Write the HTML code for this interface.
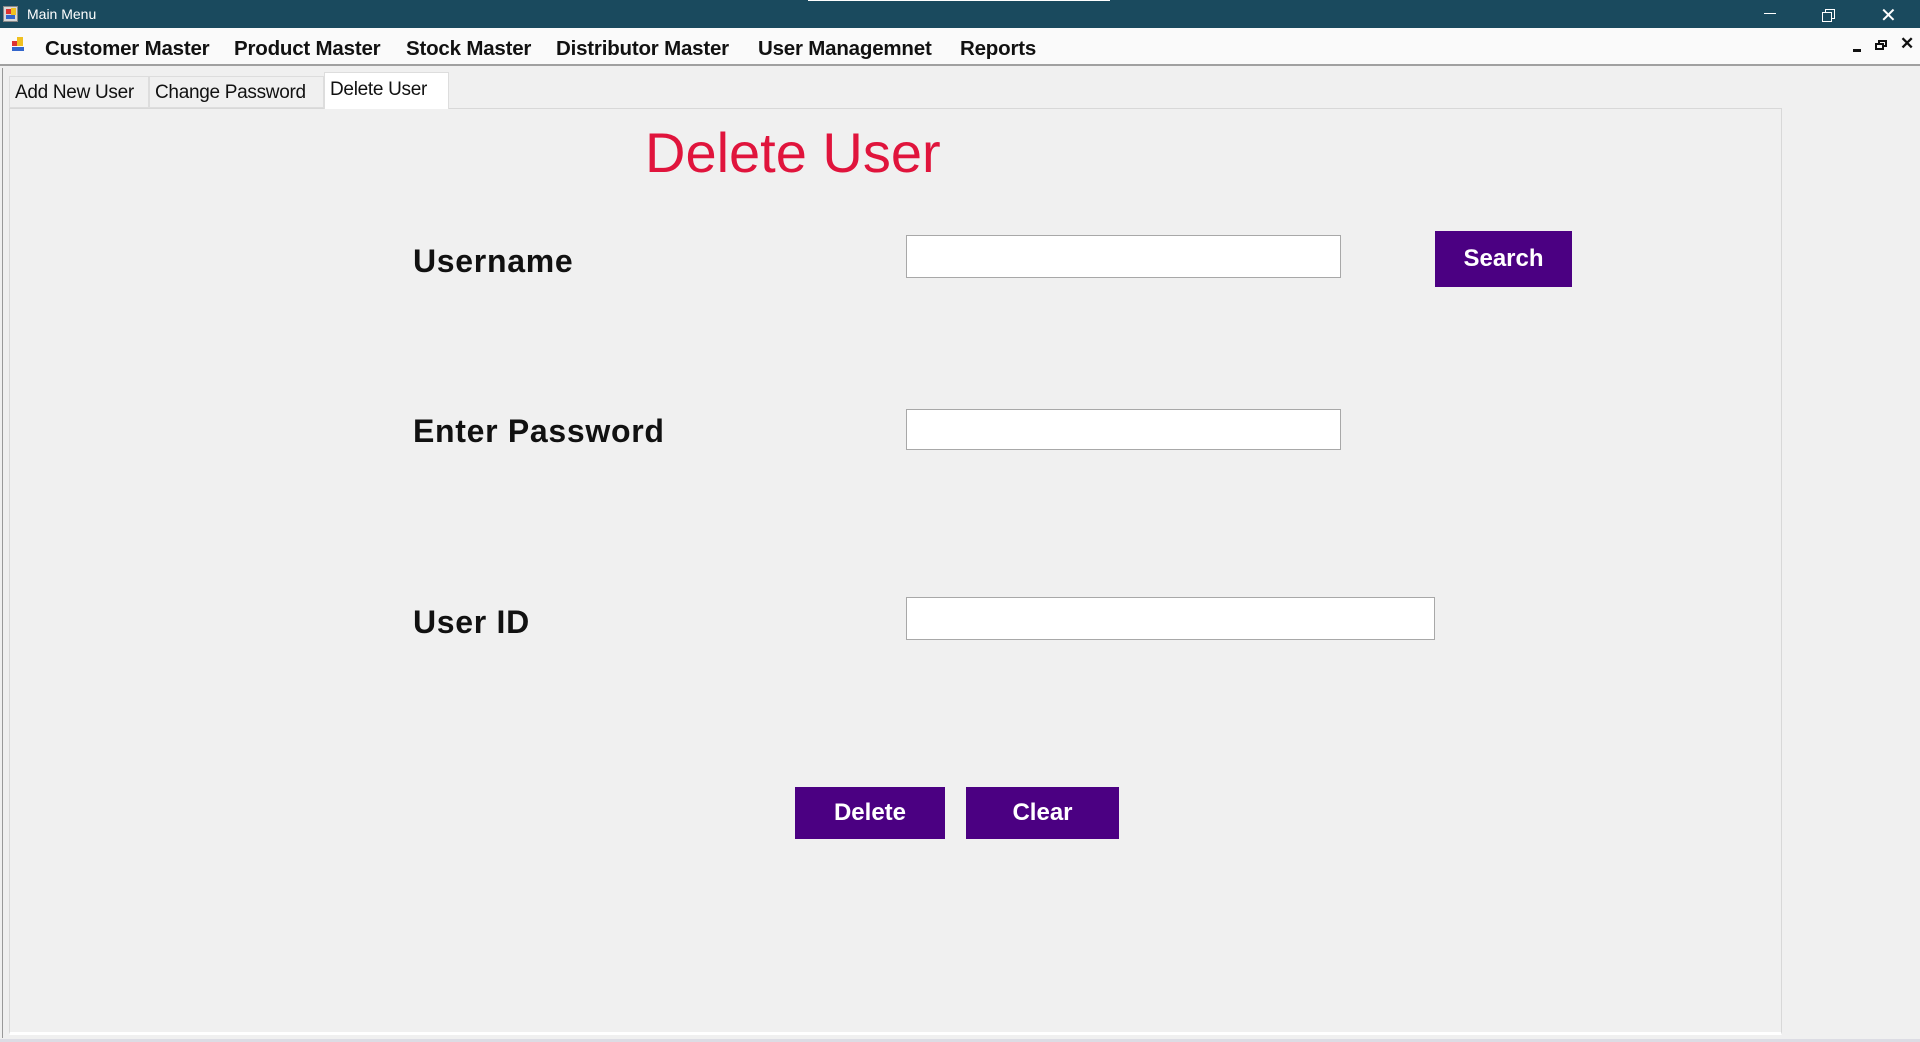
<!DOCTYPE html>
<html><head><style>
*{margin:0;padding:0;box-sizing:border-box}
body{width:1920px;height:1042px;background:#f0f0f0;position:relative;overflow:hidden;font-family:"Liberation Sans",Arial,sans-serif}
.a{position:absolute;white-space:nowrap}
.title{left:0;top:0;width:1920px;height:28px;background:#1a4a5e;color:#fff;font-size:14px}
.menu{left:0;top:28px;width:1920px;height:38px;background:#fafafa;border-bottom:2px solid #a0a0a0}
.mi{top:9px;font-size:20.5px;font-weight:bold;color:#111;letter-spacing:-0.2px}
.tab{top:76px;height:32px;border:1px solid #ddd;background:#f0f0f0;font-size:19px;color:#111;padding:5px 0 0 5px;letter-spacing:-0.3px;overflow:hidden}
.lbl{font-size:32px;font-weight:bold;color:#111;letter-spacing:0.7px}
.tb{background:#fff;border:1px solid #a8a8a8}
.btn{background:#4b0082;color:#fff;font-weight:bold;font-size:24px;display:flex;align-items:center;justify-content:center}
</style></head><body>
<div class="a title">
 <div class="a" style="left:3px;top:6px;width:15px;height:16px;background:#d8d8d8;border:1px solid #888"><div class="a" style="left:2px;top:2px;width:5px;height:5px;background:#d33"></div><div class="a" style="left:7px;top:1px;width:5px;height:7px;background:#f0c020"></div><div class="a" style="left:2px;top:8px;width:9px;height:4px;background:#36c"></div></div>
 <div class="a" style="left:27px;top:6px">Main Menu</div>
 <div class="a" style="left:808px;top:0;width:302px;height:1px;background:#fff"></div>
 <div class="a" style="left:1764px;top:13px;width:12px;height:1px;background:#fff"></div>
 <div class="a" style="left:1825px;top:9px;width:10px;height:10px;border:1px solid #fff"></div>
 <div class="a" style="left:1822px;top:12px;width:10px;height:10px;border:1px solid #fff;background:#1a4a5e"></div>
 <div class="a" style="left:1880px;top:3px;font-size:20px;color:#fff">✕</div>
</div>
<div class="a menu">
 <div class="a" style="left:12px;top:9px;width:13px;height:15px"><div class="a" style="left:0;top:4px;width:5px;height:5px;background:#d33"></div><div class="a" style="left:5px;top:0;width:6px;height:9px;background:#f0c020"></div><div class="a" style="left:0;top:10px;width:12px;height:4px;background:#36c"></div></div>
 <div class="a mi" style="left:45px">Customer Master</div>
 <div class="a mi" style="left:234px">Product Master</div>
 <div class="a mi" style="left:406px">Stock Master</div>
 <div class="a mi" style="left:556px">Distributor Master</div>
 <div class="a mi" style="left:758px">User Managemnet</div>
 <div class="a mi" style="left:960px">Reports</div>
 <div class="a" style="left:1853px;top:21px;width:8px;height:3px;background:#111"></div>
 <div class="a" style="left:1878px;top:12px;width:9px;height:7px;border:2px solid #111"></div>
 <div class="a" style="left:1875px;top:15px;width:9px;height:7px;border:2px solid #111;background:#fafafa"></div>
 <div class="a" style="left:1900px;top:6px;font-size:17px;font-weight:bold;color:#111">✕</div>
</div>
<div class="a" style="left:2px;top:68px;width:1px;height:970px;background:#999"></div>
<div class="a" style="left:9px;top:108px;width:1773px;height:927px;border:1px solid #d8d8d8;border-bottom:3px solid #fff;background:#f0f0f0"></div>
<div class="a tab" style="left:9px;width:140px">Add New User</div>
<div class="a tab" style="left:149px;width:175px">Change Password</div>
<div class="a tab" style="left:324px;top:72px;height:37px;width:125px;background:#fff;border-bottom:none;padding-top:6px">Delete User</div>
<div class="a" style="left:645px;top:120px;font-size:56px;color:#e0143c">Delete User</div>
<div class="a lbl" style="left:413px;top:243px">Username</div>
<div class="a lbl" style="left:413px;top:413px">Enter Password</div>
<div class="a lbl" style="left:413px;top:604px">User ID</div>
<div class="a tb" style="left:906px;top:235px;width:435px;height:43px"></div>
<div class="a tb" style="left:906px;top:409px;width:435px;height:41px"></div>
<div class="a tb" style="left:906px;top:597px;width:529px;height:43px"></div>
<div class="a btn" style="left:1435px;top:231px;width:137px;height:56px">Search</div>
<div class="a btn" style="left:795px;top:787px;width:150px;height:52px">Delete</div>
<div class="a btn" style="left:966px;top:787px;width:153px;height:52px">Clear</div>
<div class="a" style="left:0;top:1039px;width:1920px;height:3px;background:#dcdce4"></div>
</body></html>
